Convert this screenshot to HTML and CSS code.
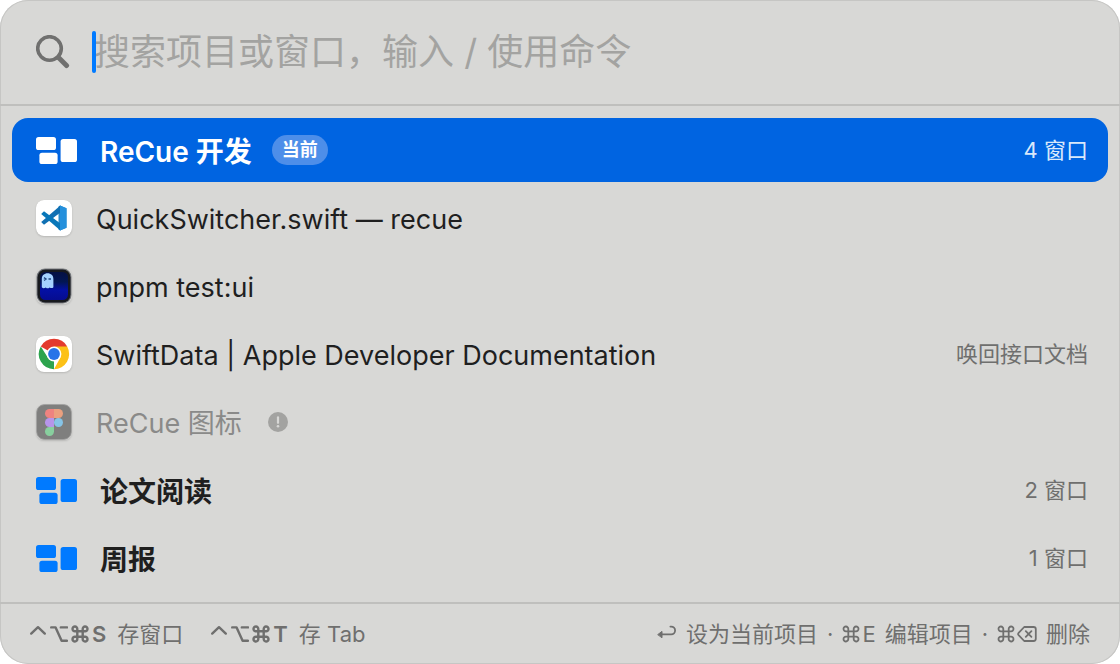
FILE: index.html
```html
<!DOCTYPE html>
<html lang="zh-CN">
<head>
  <meta charset="UTF-8" />
  <meta name="viewport" content="width=device-width, initial-scale=1.0"/>
  <title>ReCue</title>
  <link rel="stylesheet" href="styles.css">
</head>
<body>
  <!-- shared icons -->
  <svg class="sprite" aria-hidden="true">
    <symbol id="project" viewBox="0 -1 42 28">
      <rect x="0" y="0" width="20" height="13" rx="2.6"/>
      <rect x="3.4" y="15.7" width="18.2" height="11.3" rx="2.6"/>
      <rect x="24.6" y="2" width="16.4" height="23" rx="2.6"/>
    </symbol>
    <symbol id="ctrl" viewBox="0 0 18 18">
      <path d="M2.2 8.6 9 2.2 15.8 8.6"/>
    </symbol>
    <symbol id="opt" viewBox="0 0 18 18">
      <path d="M1.2 2.4H5.6L11.6 15.8H17M10.8 2.4H17"/>
    </symbol>
    <symbol id="cmd" viewBox="0 0 18 18">
      <path d="M6.3 6.3V4A2.4 2.4 0 1 0 3.9 6.3H14.1A2.4 2.4 0 1 0 11.7 4V14A2.4 2.4 0 1 0 14.1 11.7H3.9A2.4 2.4 0 1 0 6.3 14Z"/>
    </symbol>
  </svg>

  <main class="panel">
    <div class="search">
      <svg class="search-icon" viewBox="0 0 34 34" aria-hidden="true">
        <circle cx="13.5" cy="13.5" r="11.8" stroke-width="3.6"/>
        <path d="M22.5 22.5 30.5 30.5" stroke-width="5"/>
      </svg>
      <div class="search-field">
        <span class="caret"></span>
        <input type="text" class="search-input" aria-label="搜索" placeholder="搜索项目或窗口，输入 / 使用命令" />
      </div>
    </div>

    <ul class="results">
      <li>
        <button type="button" class="row project selected">
          <svg class="project-icon" aria-hidden="true"><use href="#project"/></svg>
          <span class="title">ReCue 开发</span>
          <span class="badge">当前</span>
          <span class="meta">4 窗口</span>
        </button>
      </li>
      <li>
        <button type="button" class="row">
          <svg class="app-icon" viewBox="0 0 36 36" aria-hidden="true">
            <rect width="36" height="36" rx="8" fill="#fff"/>
            <path d="M24 5.5 30.5 8.3V27.7L24 30.5 22.5 29.5V6.5Z" fill="#2489ca"/>
            <path d="M24.4 5.5 5.2 22 8 24.8 24.4 12.6Z" fill="#1070b3"/>
            <path d="M24.4 30.5 5.2 14 8 11.2 24.4 23.4Z" fill="#0877b9"/>
            <path d="M24 5.5 30.5 8.3V27.7L24 30.5Z" fill="#2590dc"/>
          </svg>
          <span class="title">QuickSwitcher.swift — recue</span>
        </button>
      </li>
      <li>
        <button type="button" class="row">
          <svg class="app-icon" viewBox="0 0 36 36" aria-hidden="true">
            <defs>
              <linearGradient id="term" x1="0" y1="0" x2="0" y2="1">
                <stop offset="0" stop-color="#041044"/>
                <stop offset="0.35" stop-color="#021653"/>
                <stop offset="0.65" stop-color="#0410a4"/>
                <stop offset="1" stop-color="#060c90"/>
              </linearGradient>
            </defs>
            <rect x="0.5" y="0.5" width="35" height="35" rx="8.5" fill="#74777b"/>
            <rect x="1.5" y="1.5" width="33" height="33" rx="8" fill="#17191e"/>
            <rect x="4" y="4" width="28" height="28" rx="5.5" fill="url(#term)"/>
            <path d="M5.8 19.2V10.9C5.8 7.4 8.3 5.2 11.6 5.2S17.4 7.4 17.4 10.9V19.2C16.2 20.6 14.8 20 13.6 19.4 12.3 20.6 11 20.6 9.8 19.4 8.5 20.2 7 20.6 5.8 19.2Z" fill="#a5d2ff"/>
            <path d="M8 9.6 10 11 8 12.4M12.5 11H15" fill="none" stroke="#21467f" stroke-width="1.3"/>
          </svg>
          <span class="title">pnpm test:ui</span>
        </button>
      </li>
      <li>
        <button type="button" class="row">
          <svg class="app-icon" viewBox="0 0 36 36" aria-hidden="true">
            <rect width="36" height="36" rx="8" fill="#fff"/>
            <path d="M18 18 4.8 10.4A15.2 15.2 0 0 1 31.2 10.4Z" fill="#e33b2e"/>
            <path d="M18 18 18 33.2A15.2 15.2 0 0 1 4.8 10.4L11.8 21.5Z" fill="#2da44e"/>
            <path d="M18 10.6H31.2A15.2 15.2 0 0 1 18 33.2L24.4 21.5Z" fill="#fcc117"/>
            <circle cx="18" cy="18" r="7.4" fill="#fff"/>
            <circle cx="18" cy="18" r="5.9" fill="#2674e8"/>
          </svg>
          <span class="title">SwiftData | Apple Developer Documentation</span>
          <span class="meta">唤回接口文档</span>
        </button>
      </li>
      <li>
        <button type="button" class="row missing">
          <svg class="app-icon" viewBox="0 0 36 36" aria-hidden="true">
            <rect x="0.5" y="0.5" width="35" height="35" rx="8" fill="#7f7f7e" stroke="#a3a3a2"/>
            <path d="M18 5H13.5A4.5 4.5 0 0 0 13.5 14H18Z" fill="#ee8380"/>
            <path d="M18 5H22.5A4.5 4.5 0 0 1 22.5 14H18Z" fill="#eba07f"/>
            <path d="M18 14H13.5A4.5 4.5 0 0 0 13.5 23H18Z" fill="#b695ea"/>
            <circle cx="22.5" cy="18.5" r="4.5" fill="#86c4e7"/>
            <path d="M18 23H13.5A4.5 4.5 0 1 0 18 27.5Z" fill="#88cf9e"/>
          </svg>
          <span class="title">ReCue 图标</span>
          <svg class="warn-icon" viewBox="0 0 20 20" aria-hidden="true">
            <circle cx="10" cy="10" r="10" fill="#a3a3a1"/>
            <path d="M10 5.4V10.8" stroke="#d8d8d6" stroke-width="2.2" stroke-linecap="round"/>
            <circle cx="10" cy="14.3" r="1.3" fill="#d8d8d6"/>
          </svg>
        </button>
      </li>
      <li>
        <button type="button" class="row project">
          <svg class="project-icon" aria-hidden="true"><use href="#project"/></svg>
          <span class="title">论文阅读</span>
          <span class="meta">2 窗口</span>
        </button>
      </li>
      <li>
        <button type="button" class="row project">
          <svg class="project-icon" aria-hidden="true"><use href="#project"/></svg>
          <span class="title">周报</span>
          <span class="meta">1 窗口</span>
        </button>
      </li>
    </ul>

    <footer class="footer">
      <div class="hints">
        <span class="hint">
          <kbd class="keys bold">
            <svg class="key"><use href="#ctrl"/></svg>
            <svg class="key"><use href="#opt"/></svg>
            <svg class="key"><use href="#cmd"/></svg>
            <span>S</span>
          </kbd>
          <span>存窗口</span>
        </span>
        <span class="hint">
          <kbd class="keys bold">
            <svg class="key"><use href="#ctrl"/></svg>
            <svg class="key"><use href="#opt"/></svg>
            <svg class="key"><use href="#cmd"/></svg>
            <span>T</span>
          </kbd>
          <span>存 Tab</span>
        </span>
      </div>
      <div class="actions">
        <kbd class="keys">
          <svg class="key return" viewBox="0 0 20 18">
            <path d="M5 9.4H14.2A3.9 3.9 0 0 0 14.2 1.6H13.4"/>
            <path class="solid" d="M1 9.4 5 6.4V12.4Z"/>
          </svg>
        </kbd>
        <span>设为当前项目</span>
        <span>·</span>
        <kbd class="keys"><svg class="key"><use href="#cmd"/></svg><span>E</span></kbd>
        <span>编辑项目</span>
        <span>·</span>
        <kbd class="keys">
          <svg class="key"><use href="#cmd"/></svg>
          <svg class="key delete" viewBox="0 0 20 18">
            <path d="M7.2 2H16.6A2.2 2.2 0 0 1 18.8 4.2V13.8A2.2 2.2 0 0 1 16.6 16H7.2L1.4 9.8Q0.8 9 1.4 8.2ZM8.8 6.2 14.4 11.8M14.4 6.2 8.8 11.8"/>
          </svg>
        </kbd>
        <span>删除</span>
      </div>
    </footer>
  </main>
</body>
</html>
```
FILE: styles.css
```css
:root {
  --panel-bg: #d8d8d6;
  --line: #bfbfbd;
  --accent: #007aff;
  --selected: #0064e1;
  --text: #1f1f1f;
  --secondary: #6f6f6e;
  --disabled: #8a8a89;
}

* {
  margin: 0;
  padding: 0;
  box-sizing: border-box;
  font-family: Inter, "Noto Sans CJK SC", sans-serif;
}

body {
  background-color: white;
}

.sprite {
  display: none;
}

.panel {
  min-height: 100vh;
  display: flex;
  flex-direction: column;
  background-color: var(--panel-bg);
  border-radius: 28px;
  box-shadow: inset 0 0 0 1px #c6c6c4;
}

.search {
  display: flex;
  align-items: center;
  gap: 24px;
  height: 106px;
  padding: 0 36px;
  border-bottom: 2px solid var(--line);
}

.search-icon {
  width: 34px;
  height: 34px;
  fill: none;
  stroke: #70706f;
  stroke-linecap: round;
}

.search-field {
  position: relative;
  flex: 1;
}

.caret {
  position: absolute;
  left: -2px;
  top: 6px;
  width: 4px;
  height: 42px;
  border-radius: 2px;
  background-color: var(--accent);
}

.search-input {
  display: block;
  width: 100%;
  height: 54px;
  border: none;
  outline: none;
  background: transparent;
  color: var(--text);
  font-size: 36px;
}

.search-input::placeholder {
  color: #a3a3a1;
  opacity: 1;
}

.results {
  flex: 1;
  display: flex;
  flex-direction: column;
  gap: 4px;
  padding: 12px;
  list-style: none;
}

.row {
  display: flex;
  align-items: center;
  width: 100%;
  height: 64px;
  padding: 0 20px 0 24px;
  border: none;
  border-radius: 16px;
  background: transparent;
  color: var(--text);
  font-size: 27px;
  line-height: 36px;
  text-align: left;
  white-space: nowrap;
  cursor: pointer;
}

.title {
  padding-top: 4px;
}

.project {
  font-size: 28px;
  font-weight: 600;
}

.project .title {
  padding-top: 3px;
}

.selected {
  background-color: var(--selected);
  color: white;
}

.missing {
  color: var(--disabled);
}

.project-icon {
  width: 42px;
  height: 28px;
  margin-right: 22px;
  fill: var(--accent);
}

.selected .project-icon {
  fill: white;
}

.app-icon {
  width: 36px;
  height: 36px;
  margin-right: 24px;
  border-radius: 8px;
  box-shadow: 0 1px 2px rgba(0, 0, 0, 0.15);
}

.warn-icon {
  width: 20px;
  height: 20px;
  margin-left: 26px;
}

.badge {
  margin-left: 20px;
  padding: 0 10px;
  border-radius: 15px;
  background-color: #4d8ee9;
  font-size: 18px;
  line-height: 30px;
}

.meta {
  margin-left: auto;
  color: var(--secondary);
  font-size: 22px;
  font-weight: 400;
}

.selected .meta {
  color: #d9e8fb;
}

.footer {
  display: flex;
  align-items: center;
  justify-content: space-between;
  height: 62px;
  padding: 0 30px 0 29px;
  border-top: 2px solid var(--line);
  color: var(--secondary);
  font-size: 22px;
  line-height: 30px;
  white-space: nowrap;
}

.hints {
  display: flex;
  gap: 27px;
}

.hint {
  display: flex;
  align-items: center;
  gap: 11px;
}

.actions {
  display: flex;
  align-items: center;
  gap: 9px;
}

.keys {
  display: flex;
  align-items: center;
  gap: 3px;
}

.actions .keys {
  gap: 2px;
}

.bold {
  font-weight: 600;
}

.key {
  width: 18px;
  height: 18px;
  fill: none;
  stroke: currentColor;
  stroke-width: 1.8;
  stroke-linecap: round;
  stroke-linejoin: round;
}

.bold .key {
  stroke-width: 2.4;
}

.return,
.delete {
  width: 20px;
}

.solid {
  fill: currentColor;
  stroke-width: 1;
}
```
